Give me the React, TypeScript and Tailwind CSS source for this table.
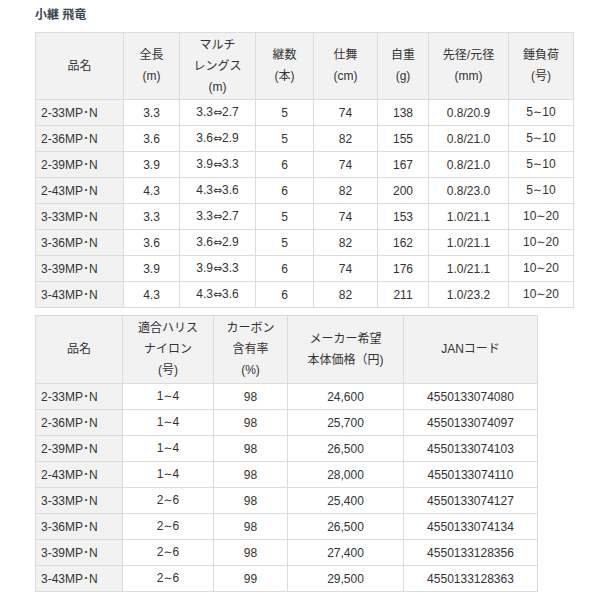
const specHead = [
  ['品名'],
  ['全長', '(m)'],
  ['マルチ', 'レングス', '(m)'],
  ['継数', '(本)'],
  ['仕舞', '(cm)'],
  ['自重', '(g)'],
  ['先径/元径', '(mm)'],
  ['錘負荷', '(号)'],
];
const specCols = ['w-[88px]', 'w-[56px]', 'w-[76px]', 'w-[58px]', 'w-[64px]', 'w-[51px]', 'w-[80px]', 'w-[65px]'];

const specRows = [
  ['2-33MP･N', '3.3', '3.3⇔2.7', '5', '74', '138', '0.8/20.9', '5∼10'],
  ['2-36MP･N', '3.6', '3.6⇔2.9', '5', '82', '155', '0.8/21.0', '5∼10'],
  ['2-39MP･N', '3.9', '3.9⇔3.3', '6', '74', '167', '0.8/21.0', '5∼10'],
  ['2-43MP･N', '4.3', '4.3⇔3.6', '6', '82', '200', '0.8/23.0', '5∼10'],
  ['3-33MP･N', '3.3', '3.3⇔2.7', '5', '74', '153', '1.0/21.1', '10∼20'],
  ['3-36MP･N', '3.6', '3.6⇔2.9', '5', '82', '162', '1.0/21.1', '10∼20'],
  ['3-39MP･N', '3.9', '3.9⇔3.3', '6', '74', '176', '1.0/21.1', '10∼20'],
  ['3-43MP･N', '4.3', '4.3⇔3.6', '6', '82', '211', '1.0/23.2', '10∼20'],
];

const priceHead = [
  ['品名'],
  ['適合ハリス', 'ナイロン', '(号)'],
  ['カーボン', '含有率', '(%)'],
  ['メーカー希望', '本体価格（円)'],
  ['JANコード'],
];
const priceCols = ['w-[87px]', 'w-[91px]', 'w-[74px]', 'w-[116px]', 'w-[134px]'];

const priceRows = [
  ['2-33MP･N', '1∼4', '98', '24,600', '4550133074080'],
  ['2-36MP･N', '1∼4', '98', '25,700', '4550133074097'],
  ['2-39MP･N', '1∼4', '98', '26,500', '4550133074103'],
  ['2-43MP･N', '1∼4', '98', '28,000', '4550133074110'],
  ['3-33MP･N', '2∼6', '98', '25,400', '4550133074127'],
  ['3-36MP･N', '2∼6', '98', '26,500', '4550133074134'],
  ['3-39MP･N', '2∼6', '98', '27,400', '4550133128356'],
  ['3-43MP･N', '2∼6', '99', '29,500', '4550133128363'],
];

// arrows and tildes look right only in DejaVu
function Cell({ text }: { text: string }) {
  const parts = text.split(/([⇔∼])/);
  return (
    <>
      {parts.map((p, i) =>
        p === '⇔' || p === '∼' ? (
          <span key={i} className="font-['DejaVu_Sans',sans-serif] text-[11px]">
            {p}
          </span>
        ) : (
          p
        )
      )}
    </>
  );
}

function SpecTable({
  head,
  cols,
  rows,
  tableClass,
  headClass,
}: {
  head: string[][];
  cols: string[];
  rows: string[][];
  tableClass: string;
  headClass: string;
}) {
  return (
    <table className={`table-fixed border-collapse text-[12px] text-[#333] ${tableClass}`}>
      <colgroup>
        {cols.map((w, i) => (
          <col key={i} className={w} />
        ))}
      </colgroup>
      <thead>
        <tr className={headClass}>
          {head.map((lines, i) => (
            <th
              key={i}
              className="border border-[#dcdcdc] bg-[#f2f2f2] p-0 text-center align-middle font-normal leading-[21px]"
            >
              {lines.map((l, j) => (
                <div key={j}>{l}</div>
              ))}
            </th>
          ))}
        </tr>
      </thead>
      <tbody>
        {rows.map((r, i) => (
          <tr key={i} className="h-[26px]">
            {r.map((c, j) =>
              j === 0 ? (
                <td
                  key={j}
                  className="border border-[#dcdcdc] bg-[#f2f2f2] py-0 pl-[5px] text-left align-middle"
                >
                  {c}
                </td>
              ) : (
                <td
                  key={j}
                  className="border border-[#dcdcdc] bg-white p-0 text-center align-middle"
                >
                  <Cell text={c} />
                </td>
              )
            )}
          </tr>
        ))}
      </tbody>
    </table>
  );
}

export default function App() {
  return (
    <div className="flex h-[600px] w-[600px] flex-col gap-[7px] bg-white pl-[35px] font-['Liberation_Sans','Noto_Sans_CJK_JP','DejaVu_Sans',sans-serif]">
      <div className="-mb-[7px] h-[32px] pt-[7px] text-[12px] font-bold leading-[16px] text-[#3a4654]">
        小継 飛竜
      </div>
      <SpecTable head={specHead} cols={specCols} rows={specRows} tableClass="w-[538px]" headClass="h-[67px]" />
      <SpecTable head={priceHead} cols={priceCols} rows={priceRows} tableClass="w-[502px]" headClass="h-[68px]" />
    </div>
  );
}
